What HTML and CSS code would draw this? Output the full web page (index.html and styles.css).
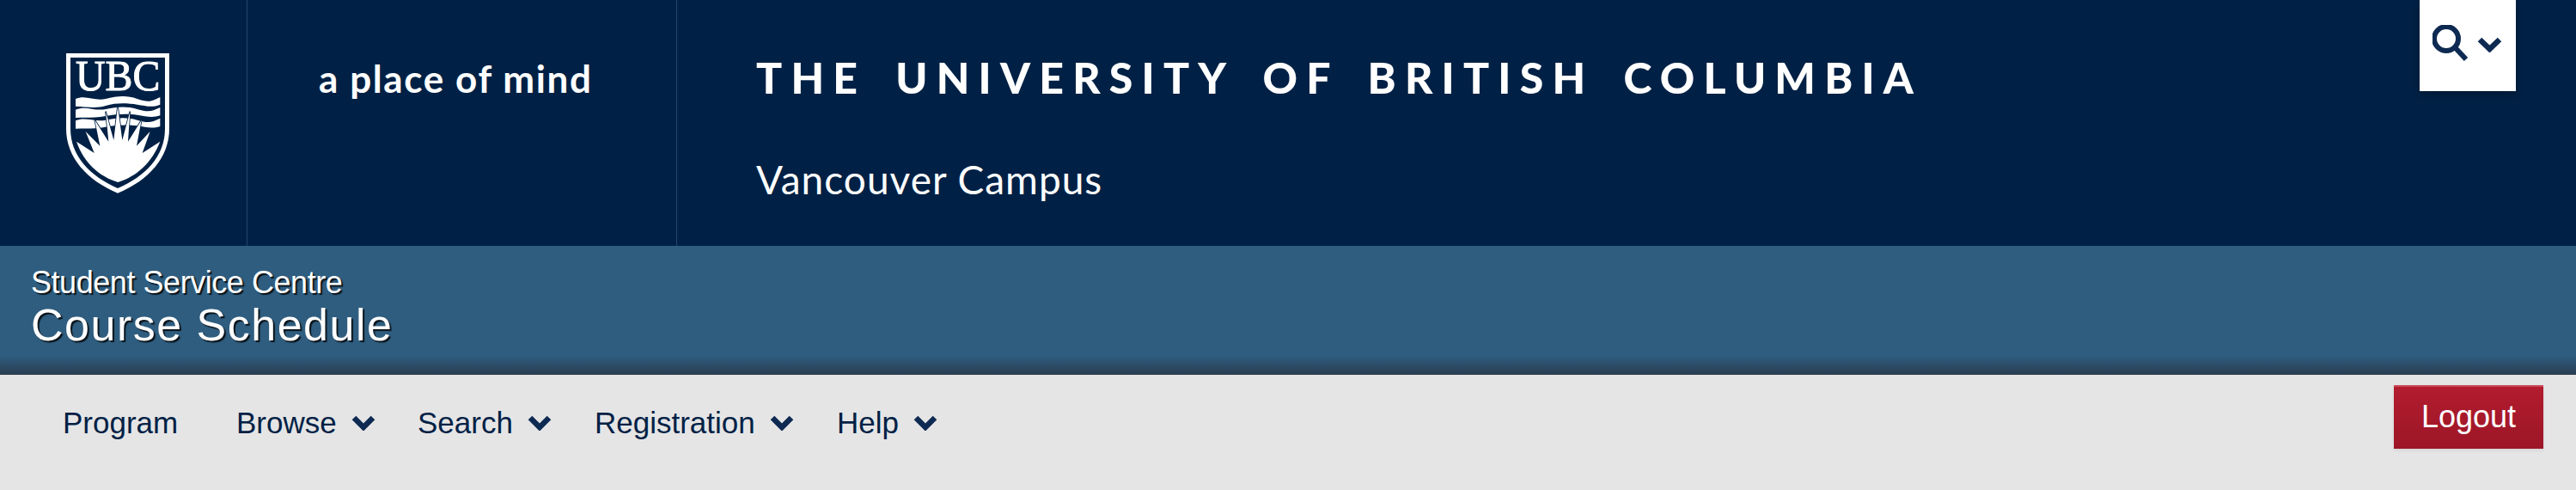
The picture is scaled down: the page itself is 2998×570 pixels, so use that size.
FILE: index.html
```html
<!DOCTYPE html>
<html lang="en">
<head>
<meta charset="utf-8">
<title>Course Schedule</title>
<link rel="stylesheet" href="styles.css">
</head>
<body>
<header class="masthead">
  <div class="cell-logo">
    <svg class="shield" viewBox="52 37 360 489" aria-label="UBC">
      <path class="w" d="M52 37H412V300C412 400 340 480 232 525C125 480 52 400 52 300Z"/>
      <path class="n" d="M67 52H397V300C397 395 330 465 232 508C135 465 67 395 67 300Z"/>
      <text class="ubc" x="85" y="167" textLength="295" lengthAdjust="spacingAndGlyphs">UBC</text>
      <path class="w" d="M85 196C120 180 150 205 190 196S260 182 300 196S350 205 380 190V216C350 228 330 220 300 216S230 208 190 220S120 222 85 222Z"/>
      <path class="w" d="M85 234C120 218 150 240 190 232S260 220 300 232S350 240 380 226V254C350 264 330 256 300 252S230 248 190 256S120 260 85 262Z"/>
      <path class="w" d="M85 272C120 258 150 278 190 270S260 258 300 270S350 278 380 264V292C350 302 330 294 300 290S230 286 190 294S120 298 85 300Z"/>
      <path class="sun" d="M88 345L150 385L120 310L170 360L152 270L200 345L190 240L218 340L232 222L248 340L275 240L268 345L315 270L298 360L345 310L318 385L380 345C350 420 300 465 233 487C165 465 115 420 88 345Z"/>
    </svg>
  </div>
  <div class="cell-tag"><span class="tagline">a place of mind</span></div>
  <div class="cell-title">
    <div class="uni">THE UNIVERSITY OF BRITISH COLUMBIA</div>
    <div class="campus">Vancouver Campus</div>
  </div>
  <button class="search-box" type="button" aria-label="Search">
    <svg class="search-ico" viewBox="0 0 44 44"><circle cx="16" cy="16" r="14"/><path d="M26 26L39 40"/></svg>
    <svg class="chev-s" viewBox="0 0 29 18"><path d="M3 3L14.500 14L26 3"/></svg>
  </button>
</header>
<div class="appbar">
  <div class="app-sub">Student Service Centre</div>
  <div class="app-main">Course Schedule</div>
</div>
<nav class="nav">
  <ul class="menu">
    <li class="item item-program">Program</li>
    <li class="item item-browse">Browse<svg class="chev" viewBox="0 0 28 18"><path d="M3 3L14 14L25 3"/></svg></li>
    <li class="item item-search">Search<svg class="chev" viewBox="0 0 28 18"><path d="M3 3L14 14L25 3"/></svg></li>
    <li class="item item-reg">Registration<svg class="chev" viewBox="0 0 28 18"><path d="M3 3L14 14L25 3"/></svg></li>
    <li class="item item-help">Help<svg class="chev" viewBox="0 0 28 18"><path d="M3 3L14 14L25 3"/></svg></li>
  </ul>
  <a class="logout" href="#">Logout</a>
</nav>
</body>
</html>
```
FILE: styles.css
```css
* { box-sizing: border-box; }
html, body { margin: 0; padding: 0; }
body { width: 2998px; height: 570px; overflow: hidden; background: #e5e5e5; font-family: "Liberation Sans", Arial, sans-serif; }

.masthead { display: flex; height: 286px; background: #002145; color: #fff; font-family: "Lato", sans-serif; }
.cell-logo { width: 288px; padding: 62px 0 0 77px; border-right: 1px solid #24436b; }
.shield { display: block; width: 120px; height: 163px; overflow: visible; }
.w { fill: #fff; }
.n { fill: #002145; }
.ubc { font-family: "Liberation Serif", serif; font-size: 150px; fill: #fff; stroke: #fff; stroke-width: 3; }
.sun { fill: #fff; stroke: #002145; stroke-width: 5; paint-order: stroke; }
.cell-tag { width: 500px; padding: 62px 0 0 83px; border-right: 1px solid #24436b; }
.tagline { display: block; font-size: 44px; line-height: 58px; font-weight: 700; letter-spacing: 1.600px; white-space: nowrap; }
.cell-title { flex: 1; padding: 56px 0 0 92px; }
.uni { font-size: 50px; line-height: 68px; font-weight: 900; letter-spacing: 10.200px; word-spacing: 12px; white-space: nowrap; }
.campus { margin-top: 55px; font-size: 46px; line-height: 60px; font-weight: 400; letter-spacing: 1px; white-space: nowrap; }
.search-box { display: flex; align-items: flex-start; width: 112px; height: 106px; margin-right: 70px; padding: 29px 0 0 15px; border: 0; background: #fff; box-shadow: 0 4px 10px rgba(0, 0, 0, .25); }
.search-ico { width: 44px; height: 44px; fill: none; stroke: #0e2a52; stroke-width: 6; }
.chev-s { width: 29px; height: 18px; margin: 14px 0 0 8px; fill: none; stroke: #0e2a52; stroke-width: 6.500; }

.appbar { height: 150px; padding: 23px 0 0 36px; color: #fff; background: linear-gradient(to bottom, #2f5d7f 0, #2f5d7f 128px, #2a3d50 150px); text-shadow: 2px 2px 1px rgba(0, 0, 0, .8); }
.app-sub { font-size: 36px; line-height: 40px; letter-spacing: -.45px; white-space: nowrap; }
.app-main { font-size: 52px; line-height: 58px; letter-spacing: 1.500px; white-space: nowrap; }

.nav { display: flex; justify-content: space-between; align-items: flex-start; height: 134px; padding: 12px 38px 0 73px; background: #e5e5e5; }
.menu { display: flex; margin: 0; padding: 22px 0 0; list-style: none; color: #002145; font-size: 35px; line-height: 44px; }
.item { display: flex; align-items: center; white-space: nowrap; }
.item-program { width: 202px; }
.item-browse { width: 211px; }
.item-search { width: 206px; }
.item-reg { width: 282px; }
.chev { width: 28px; height: 18px; margin-left: 17px; fill: none; stroke: #0e2a52; stroke-width: 6.500; }
.logout { display: flex; align-items: center; justify-content: center; width: 174px; height: 74px; padding-bottom: 2px; color: #fff; font-size: 36px; text-decoration: none; border-top: 2px solid #c9495a; background: linear-gradient(to bottom, #b21c2e, #9c1627); box-shadow: 0 2px 4px rgba(0, 0, 0, .08); }
```
